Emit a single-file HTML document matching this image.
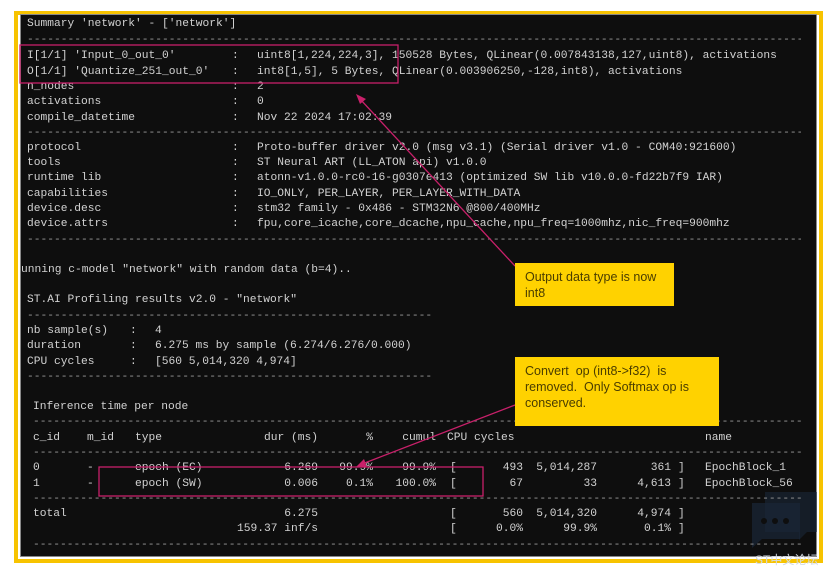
<!DOCTYPE html>
<html><head><meta charset="utf-8"><style>
html,body{margin:0;padding:0;background:#fff;width:830px;height:572px;overflow:hidden;position:relative}
.frame{position:absolute;left:14px;top:11px;width:809px;height:552px;box-sizing:border-box;border:4px solid #f7c300;background:#fff}
.term{position:absolute;left:20px;top:14px;width:797px;height:543px;background:#0e0e0e;border:1px solid #888;box-sizing:border-box}
.t{position:absolute;margin-top:3px;font-family:"Liberation Mono",monospace;font-size:11.25px;line-height:15px;color:#d2d2d2;white-space:pre}
.r{transform:translateX(-100%)}
.d{overflow:hidden;color:#9a9a9a}
.call{position:absolute;background:#ffd200;font-family:"Liberation Sans",sans-serif;font-size:12.5px;line-height:16px;color:#4a3d00;box-sizing:border-box;padding:5px 10px}
</style></head><body>
<div class="frame"></div>
<div class="term"></div>
<svg style="position:absolute;left:0;top:0" width="830" height="572">
  <path d="M765 492 h52 v40 h-10 l-8 8 v-8 h-34 z" fill="#1c2a3c" opacity="0.55"/>
  <path d="M752 503 h48 v36 h-38 l-10 9 z" fill="#1a2638" opacity="0.7"/>
  <circle cx="764" cy="521" r="3" fill="#0e0e0e"/><circle cx="775" cy="521" r="3" fill="#0e0e0e"/><circle cx="786" cy="521" r="3" fill="#0e0e0e"/>
</svg>
<div class="t" style="left:27px;top:14px">Summary 'network' - ['network']</div>
<div class="t d" style="left:27px;top:30px;width:774px">------------------------------------------------------------------------------------------------------------------------------</div>
<div class="t" style="left:27px;top:46px">I[1/1] 'Input_0_out_0'</div><div class="t" style="left:232px;top:46px">:</div><div class="t" style="left:257px;top:46px">uint8[1,224,224,3], 150528 Bytes, QLinear(0.007843138,127,uint8), activations</div>
<div class="t" style="left:27px;top:62px">O[1/1] 'Quantize_251_out_0'</div><div class="t" style="left:232px;top:62px">:</div><div class="t" style="left:257px;top:62px">int8[1,5], 5 Bytes, QLinear(0.003906250,-128,int8), activations</div>
<div class="t" style="left:27px;top:77px">n_nodes</div><div class="t" style="left:232px;top:77px">:</div><div class="t" style="left:257px;top:77px">2</div>
<div class="t" style="left:27px;top:92px">activations</div><div class="t" style="left:232px;top:92px">:</div><div class="t" style="left:257px;top:92px">0</div>
<div class="t" style="left:27px;top:108px">compile_datetime</div><div class="t" style="left:232px;top:108px">:</div><div class="t" style="left:257px;top:108px">Nov 22 2024 17:02:39</div>
<div class="t d" style="left:27px;top:123px;width:774px">------------------------------------------------------------------------------------------------------------------------------</div>
<div class="t" style="left:27px;top:138px">protocol</div><div class="t" style="left:232px;top:138px">:</div><div class="t" style="left:257px;top:138px">Proto-buffer driver v2.0 (msg v3.1) (Serial driver v1.0 - COM40:921600)</div>
<div class="t" style="left:27px;top:153px">tools</div><div class="t" style="left:232px;top:153px">:</div><div class="t" style="left:257px;top:153px">ST Neural ART (LL_ATON api) v1.0.0</div>
<div class="t" style="left:27px;top:168px">runtime lib</div><div class="t" style="left:232px;top:168px">:</div><div class="t" style="left:257px;top:168px">atonn-v1.0.0-rc0-16-g0307e413 (optimized SW lib v10.0.0-fd22b7f9 IAR)</div>
<div class="t" style="left:27px;top:184px">capabilities</div><div class="t" style="left:232px;top:184px">:</div><div class="t" style="left:257px;top:184px">IO_ONLY, PER_LAYER, PER_LAYER_WITH_DATA</div>
<div class="t" style="left:27px;top:199px">device.desc</div><div class="t" style="left:232px;top:199px">:</div><div class="t" style="left:257px;top:199px">stm32 family - 0x486 - STM32N6 @800/400MHz</div>
<div class="t" style="left:27px;top:214px">device.attrs</div><div class="t" style="left:232px;top:214px">:</div><div class="t" style="left:257px;top:214px">fpu,core_icache,core_dcache,npu_cache,npu_freq=1000mhz,nic_freq=900mhz</div>
<div class="t d" style="left:27px;top:230px;width:774px">------------------------------------------------------------------------------------------------------------------------------</div>
<div class="t" style="left:21px;top:260px;width:400px;overflow:hidden">unning c-model "network" with random data (b=4)..</div>
<div class="t" style="left:27px;top:290px">ST.AI Profiling results v2.0 - "network"</div>
<div class="t d" style="left:27px;top:306px;width:406px">------------------------------------------------------------------------------------------------------------------------------</div>
<div class="t" style="left:27px;top:321px">nb sample(s)</div><div class="t" style="left:130px;top:321px">:</div><div class="t" style="left:155px;top:321px">4</div>
<div class="t" style="left:27px;top:336px">duration</div><div class="t" style="left:130px;top:336px">:</div><div class="t" style="left:155px;top:336px">6.275 ms by sample (6.274/6.276/0.000)</div>
<div class="t" style="left:27px;top:352px">CPU cycles</div><div class="t" style="left:130px;top:352px">:</div><div class="t" style="left:155px;top:352px">[560 5,014,320 4,974]</div>
<div class="t d" style="left:27px;top:367px;width:406px">------------------------------------------------------------------------------------------------------------------------------</div>
<div class="t" style="left:33px;top:397px">Inference time per node</div>
<div class="t d" style="left:33px;top:412px;width:768px">------------------------------------------------------------------------------------------------------------------------------</div>
<div class="t" style="left:33px;top:428px">c_id</div><div class="t" style="left:87px;top:428px">m_id</div><div class="t" style="left:135px;top:428px">type</div>
<div class="t r" style="left:318px;top:428px">dur (ms)</div><div class="t r" style="left:373px;top:428px">%</div><div class="t r" style="left:436px;top:428px">cumul</div>
<div class="t" style="left:447px;top:428px">CPU cycles</div><div class="t" style="left:705px;top:428px">name</div>
<div class="t d" style="left:33px;top:443px;width:768px">------------------------------------------------------------------------------------------------------------------------------</div>
<div class="t" style="left:33px;top:458px">0</div><div class="t" style="left:87px;top:458px">-</div><div class="t" style="left:135px;top:458px">epoch (EC)</div>
<div class="t r" style="left:318px;top:458px">6.269</div><div class="t r" style="left:373px;top:458px">99.9%</div><div class="t r" style="left:436px;top:458px">99.9%</div>
<div class="t" style="left:450px;top:458px">[</div><div class="t r" style="left:523px;top:458px">493</div><div class="t r" style="left:597px;top:458px">5,014,287</div><div class="t r" style="left:671px;top:458px">361</div><div class="t" style="left:678px;top:458px">]</div><div class="t" style="left:705px;top:458px">EpochBlock_1</div>
<div class="t" style="left:33px;top:474px">1</div><div class="t" style="left:87px;top:474px">-</div><div class="t" style="left:135px;top:474px">epoch (SW)</div>
<div class="t r" style="left:318px;top:474px">0.006</div><div class="t r" style="left:373px;top:474px">0.1%</div><div class="t r" style="left:436px;top:474px">100.0%</div>
<div class="t" style="left:450px;top:474px">[</div><div class="t r" style="left:523px;top:474px">67</div><div class="t r" style="left:597px;top:474px">33</div><div class="t r" style="left:671px;top:474px">4,613</div><div class="t" style="left:678px;top:474px">]</div><div class="t" style="left:705px;top:474px">EpochBlock_56</div>
<div class="t d" style="left:33px;top:489px;width:768px">------------------------------------------------------------------------------------------------------------------------------</div>
<div class="t" style="left:33px;top:504px">total</div><div class="t r" style="left:318px;top:504px">6.275</div>
<div class="t" style="left:450px;top:504px">[</div><div class="t r" style="left:523px;top:504px">560</div><div class="t r" style="left:597px;top:504px">5,014,320</div><div class="t r" style="left:671px;top:504px">4,974</div><div class="t" style="left:678px;top:504px">]</div>
<div class="t r" style="left:318px;top:519px">159.37 inf/s</div>
<div class="t" style="left:450px;top:519px">[</div><div class="t r" style="left:523px;top:519px">0.0%</div><div class="t r" style="left:597px;top:519px">99.9%</div><div class="t r" style="left:671px;top:519px">0.1%</div><div class="t" style="left:678px;top:519px">]</div>
<div class="t d" style="left:33px;top:535px;width:768px">------------------------------------------------------------------------------------------------------------------------------</div>

<svg style="position:absolute;left:0;top:0" width="830" height="572">
  <rect x="20" y="45" width="378" height="38" fill="none" stroke="#c8206a" stroke-width="1.3"/>
  <rect x="99" y="467" width="384" height="29" fill="none" stroke="#c8206a" stroke-width="1.3"/>
  <line x1="515" y1="266" x2="360" y2="99" stroke="#c8206a" stroke-width="1.3"/>
  <polygon points="356,94 366,99 360,104" fill="#c8206a"/>
  <line x1="515" y1="405" x2="362" y2="464" stroke="#c8206a" stroke-width="1.3"/>
  <polygon points="356,467 364,459 367,467" fill="#c8206a"/>
</svg>
<div class="call" style="left:515px;top:263px;width:159px;height:43px;padding-top:6px">Output data type is now<br>int8</div>
<div class="call" style="left:515px;top:357px;width:204px;height:69px;padding-top:6px">Convert&nbsp; op (int8-&gt;f32)&nbsp; is<br>removed.&nbsp; Only Softmax op is<br>conserved.</div>
<div style="position:absolute;left:755px;top:551px;font-family:'Liberation Sans','Noto Sans CJK SC',sans-serif;font-size:12px;color:#d4dae2">ST中文论坛</div>
</body></html>
